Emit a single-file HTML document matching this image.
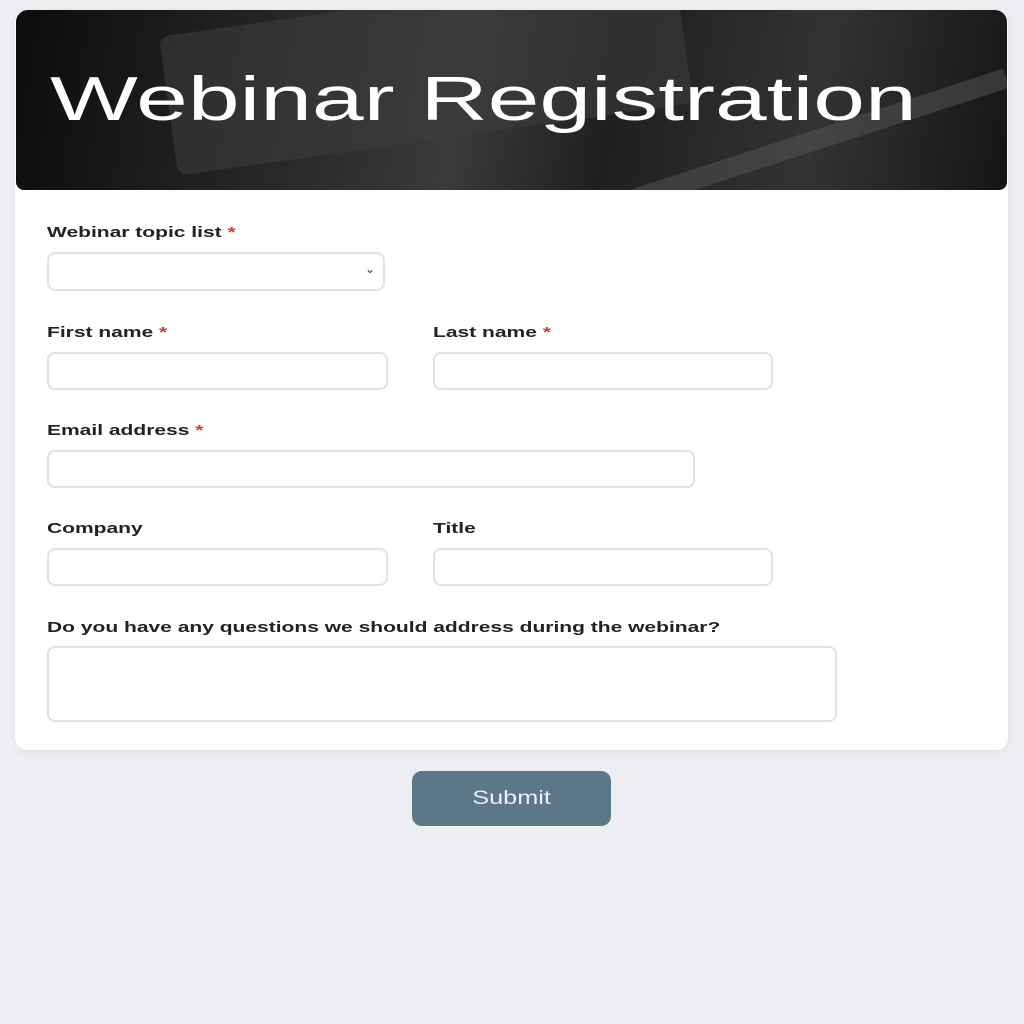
<!DOCTYPE html>
<html><head><meta charset="utf-8"><style>
html,body{margin:0;padding:0;}
body{width:1024px;height:1024px;background:#eceef1;position:relative;font-family:"Liberation Sans",sans-serif;overflow:hidden;}
.card{position:absolute;left:15px;top:10px;width:993px;height:740px;background:#fff;border-radius:12px;box-shadow:0 2px 8px rgba(0,0,0,0.06);}
.hdr{position:absolute;left:16px;top:10px;width:991px;height:180px;border-radius:12px 12px 8px 8px;overflow:hidden;
background:linear-gradient(100deg,#0c0c0c 0%,#2a2a2a 30%,#3a3a3a 45%,#1f1f1f 60%,#333 80%,#151515 100%);}
.hdr .t{position:absolute;left:34px;top:59px;font-size:62px;color:#fff;white-space:nowrap;transform-origin:left top;transform:scaleX(1.5);line-height:1;}
.lbl{position:absolute;font-size:15px;font-weight:bold;color:#222;transform-origin:left top;transform:scaleX(1.4);white-space:nowrap;}
.lbl i{color:#d33;font-style:normal;}
.in{position:absolute;border:2px solid #e2e2e2;border-radius:8px;background:#fff;box-sizing:border-box;}
.btn{position:absolute;left:412px;top:771px;width:199px;height:55px;background:#5c7787;border-radius:10px;color:#eef;font-size:19px;text-align:center;line-height:55px;}
.btn span{display:inline-block;transform:scaleX(1.33);}
</style></head><body>
<div class="card"></div>
<div class="hdr">
<div style="position:absolute;left:150px;top:-10px;width:520px;height:140px;background:#3c3c3c;transform:rotate(-8deg);border-radius:10px;opacity:.6"></div>
<div style="position:absolute;left:600px;top:120px;width:400px;height:20px;background:#555;transform:rotate(-18deg);opacity:.5"></div>
<div class="t">Webinar Registration</div></div>
<div class="lbl" style="left:47px;top:224px">Webinar topic list <i>*</i></div>
<div class="in" style="left:47px;top:252px;width:338px;height:39px"><span style="position:absolute;right:8px;top:8px;font-size:12px;color:#333">&#8964;</span></div>
<div class="lbl" style="left:47px;top:324px">First name <i>*</i></div>
<div class="lbl" style="left:433px;top:324px">Last name <i>*</i></div>
<div class="in" style="left:47px;top:352px;width:341px;height:38px"></div>
<div class="in" style="left:433px;top:352px;width:340px;height:38px"></div>
<div class="lbl" style="left:47px;top:422px">Email address <i>*</i></div>
<div class="in" style="left:47px;top:450px;width:648px;height:38px"></div>
<div class="lbl" style="left:47px;top:520px">Company</div>
<div class="lbl" style="left:433px;top:520px">Title</div>
<div class="in" style="left:47px;top:548px;width:341px;height:38px"></div>
<div class="in" style="left:433px;top:548px;width:340px;height:38px"></div>
<div class="lbl" style="left:47px;top:619px">Do you have any questions we should address during the webinar?</div>
<div class="in" style="left:47px;top:646px;width:790px;height:76px"></div>
<div class="btn"><span>Submit</span></div>
</body></html>
